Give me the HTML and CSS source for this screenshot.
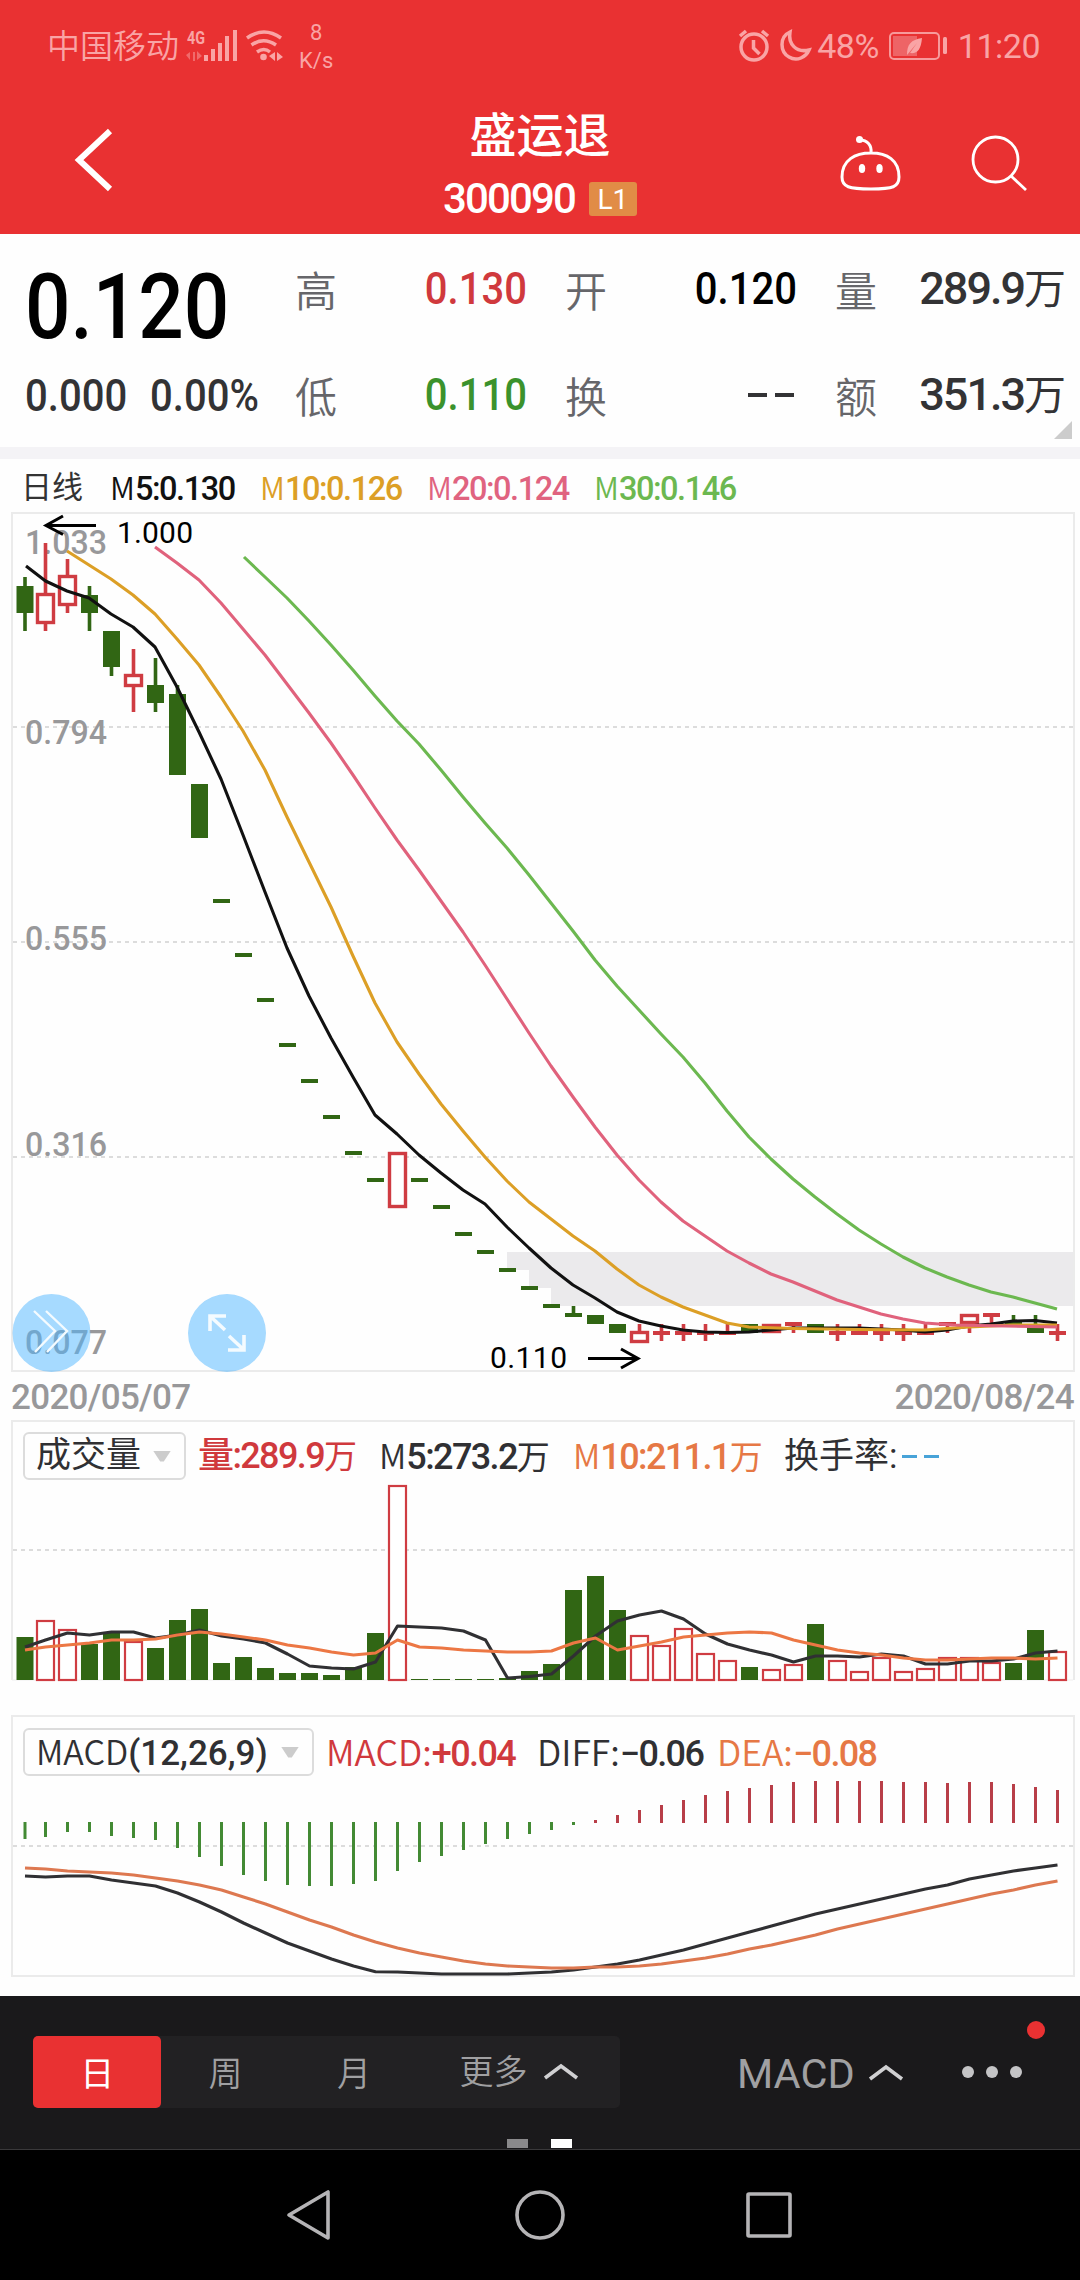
FILE: index.html
```html
<!DOCTYPE html>
<html lang="zh-CN">
<head>
<meta charset="utf-8">
<title>盛运退 300090</title>
<link rel="stylesheet" href="styles.css">
</head>
<body>
<div class="screen">
  <header class="top">
    <div class="status">
      <div class="status-left">
        <span class="carrier">中国移动</span>
        <svg class="net" width="98" height="48" viewBox="186 22 98 48">
          <text x="187" y="44" font-size="19" font-weight="700" textLength="18" lengthAdjust="spacingAndGlyphs">4G</text>
          <path class="dim" d="M190 52v8l-4-5zM193 52h2v9h-2zM197 51l5 5-5 4z"/>
          <path d="M204 55h4v6h-4zM211 49h4v12h-4zM218 43h4v18h-4zM225 36h4v25h-4zM233 30h4v31h-4z"/>
          <path class="line" d="M247 38q17-12 34 0M251.500 45q12-8.500 24.500 0M257 52q7-5 13 0"/>
          <circle cx="263.500" cy="57" r="3.300"/>
          <path d="M275 52v9l-6-5zM277 52l6 5-6 4z"/>
        </svg>
        <span class="speed"><span>8</span><span>K/s</span></span>
      </div>
      <div class="status-right">
        <svg width="74" height="36" viewBox="738 28 74 36">
          <g class="line"><circle cx="754" cy="47" r="13"/><path d="M753.500 40v8l6 6M740 36l6-5M768 36l-6-5"/><path d="M790 32c-11 5-10 20-1 25 8 5 17 0 20-7-13 3-21-6-19-18z"/></g>
        </svg>
        <span class="battery-level">48%</span>
        <svg class="battery" width="60" height="30" viewBox="888 31 60 30">
          <rect x="890" y="33" width="49" height="26" rx="4" fill="none" stroke="#f79a9b" stroke-width="2"/>
          <rect x="893" y="36" width="24" height="20" fill="#ee6466"/>
          <rect x="943" y="37" width="4" height="17" rx="1.500"/>
          <path d="M907 55c0-11 4-15 15-17-1 12-5 16-12 15l7-10z"/>
        </svg>
        <span class="clock">11:20</span>
      </div>
    </div>
    <nav class="title-bar">
      <svg class="back" width="40" height="66" viewBox="74 127 40 66"><path d="M110 131L79 160l31 29" fill="none" stroke="#fff" stroke-width="6"/></svg>
      <div class="title">
        <h1>盛运退</h1>
        <div class="code"><span class="num">300090</span><span class="badge">L1</span></div>
      </div>
      <div class="actions">
        <svg width="64" height="60" viewBox="838 134 64 60" fill="none" stroke="#fff" stroke-width="3">
          <path d="M870 153c16 0 28 7 28 24 0 10-6 12-28 12s-29-2-29-12c0-17 13-24 29-24zM870 153c1-8-4-13-11-13"/>
          <circle cx="858.500" cy="139.500" r="3.500" fill="#fff" stroke="none"/><ellipse cx="861" cy="168.500" rx="3.200" ry="4.500" fill="#fff" stroke="none"/><ellipse cx="878.500" cy="168.500" rx="3.200" ry="4.500" fill="#fff" stroke="none"/>
        </svg>
        <svg width="60" height="60" viewBox="968 132 60 60" fill="none" stroke="#fff" stroke-width="2.800"><circle cx="994.500" cy="157.500" r="22.500"/><path d="M1010 174l15 14"/></svg>
      </div>
    </nav>
  </header>

  <section class="quote">
    <div class="price num">0.120</div>
    <div class="change num"><span>0.000</span><span>0.00%</span></div>
    <dl class="stats num">
      <dt>高</dt><dd class="slim up">0.130</dd><dt>开</dt><dd class="slim flat">0.120</dd><dt>量</dt><dd>289.9<b>万</b></dd>
      <dt>低</dt><dd class="slim down">0.110</dd><dt>换</dt><dd class="dashes"><i></i><i></i></dd><dt>额</dt><dd>351.3<b>万</b></dd>
    </dl>
    <span class="corner"></span>
  </section>

  <div class="legend num">
    <span class="period">日线</span><span class="m5"><em>M</em>5:0.130</span><span class="m10"><em>M</em>10:0.126</span><span class="m20"><em>M</em>20:0.124</span><span class="m30"><em>M</em>30:0.146</span>
  </div>

  <section class="panel price-panel"><svg id="price" width="1062" height="860" viewBox="12 512 1062 860"></svg></section>
  <div class="dates num"><span>2020/05/07</span><span>2020/08/24</span></div>

  <section class="panel volume-panel">
    <svg id="volume" width="1062" height="262" viewBox="12 1420 1062 262"></svg>
    <div class="readout num">
      <button class="picker"><span>成交量</span><i class="caret"></i></button>
      <span class="vol">量:289.9<b>万</b></span><span class="v5"><em>M</em>5:273.2<b>万</b></span><span class="v10"><em>M</em>10:211.1<b>万</b></span><span class="turnover">换手率:</span><span class="blank"><i></i><i></i></span>
    </div>
  </section>

  <section class="panel macd-panel">
    <svg id="macd" width="1062" height="262" viewBox="12 1715 1062 262"></svg>
    <div class="readout num">
      <button class="picker wide"><span><em>MACD</em>(12,26,9)</span><i class="caret"></i></button>
      <span class="macd"><em>MACD:</em>+0.04</span><span class="diff"><em>DIFF:</em>−0.06</span><span class="dea"><em>DEA:</em>−0.08</span>
    </div>
  </section>

  <footer class="toolbar">
    <div class="tabs">
      <span class="tab active">日</span><span class="tab">周</span><span class="tab">月</span>
      <span class="tab more">更多<svg width="36" height="18" viewBox="0 0 36 18"><path d="M2 15L18 3l16 12"/></svg></span>
    </div>
    <span class="indicator">MACD<svg width="36" height="18" viewBox="0 0 36 18"><path d="M2 15L18 3l16 12"/></svg></span>
    <span class="dots"><i></i><i></i><i></i></span>
    <span class="alert"></span>
    <span class="pager"><i></i><i class="on"></i></span>
  </footer>
  <nav class="system">
    <svg width="1080" height="130" viewBox="0 2150 1080 130" fill="none" stroke="#b5b4b6" stroke-width="3.600" stroke-linejoin="round"><path d="M289 2215l39-23v46z"/><circle cx="540" cy="2215" r="23"/><rect x="748" y="2194" width="42" height="42" rx="1"/></svg>
  </nav>
</div>
<script src="chart.js"></script>
</body>
</html>
```
FILE: styles.css
```css
* { box-sizing: border-box; }
body { margin: 0; background: #fefefe; font-family: Roboto, "Noto Sans CJK SC", sans-serif; }
h1, dl, dt, dd { margin: 0; }
em, i { font-style: normal; }
svg { display: block; flex: none; }
.screen { width: 1080px; height: 2280px; display: flex; flex-direction: column; background: #fefefe; overflow: hidden; }
.num { font-weight: 500; letter-spacing: -0.045em; white-space: nowrap; }
.num em { font-family: "Noto Sans CJK SC", sans-serif; font-weight: 350; letter-spacing: 0; }
.num b { font-weight: 400; letter-spacing: 0; }

.top { height: 234px; background: #e93132; color: #fff; }
.status { height: 92px; display: flex; justify-content: space-between; align-items: center; padding: 0 40px 0 47px; color: #f9a4a5; font-size: 34px; line-height: 40px; }
.status svg { fill: #f9a4a5; }
.status .line { fill: none; stroke: #f9a4a5; stroke-width: 3.5; }
.status .dim { fill: #f06a6b; }
.status-left, .status-right { display: flex; align-items: center; }
.carrier { font-size: 33px; font-weight: 350; width: 139px; padding-top: 2px; }
.speed { display: flex; flex-direction: column; align-items: center; font-size: 22px; line-height: 28px; margin-left: 15px; padding-top: 1px; }
.battery-level { margin-left: 5px; letter-spacing: -0.5px; }
.battery { margin-left: 9px; }
.clock { margin-left: 10px; letter-spacing: -0.5px; }
.title-bar { height: 142px; display: grid; grid-template-columns: 1fr auto 1fr; }
.back { margin: 35px 0 0 74px; }
.title { display: flex; flex-direction: column; align-items: center; padding-top: 17px; }
.title h1 { font-size: 47px; line-height: 54px; font-weight: 500; }
.code { display: flex; align-items: center; gap: 14px; font-size: 42px; line-height: 50px; padding-top: 12px; height: 60px; }
.badge { width: 48px; height: 34px; background: #e18c46; border-radius: 3px; font-size: 28px; line-height: 35px; text-align: center; }
.actions { display: flex; justify-content: flex-end; gap: 66px; padding: 42px 51px 0 0; }

.quote { position: relative; height: 225px; display: grid; grid-template-columns: 270px 1fr; grid-template-rows: 110px 1fr; padding: 0 14px 0 25px; border-bottom: 12px solid #f4f3f6; color: #333335; }
.price, .change span, .slim { letter-spacing: 0; transform: scaleX(0.89); transform-origin: left; }
.price { font-size: 90px; line-height: 147px; color: #000; }
.change { font-size: 45px; line-height: 103px; display: flex; gap: 10px; grid-row: 2; }
.stats { grid-column: 2; grid-row: 1 / 3; display: grid; grid-template-columns: 91px 141px 129px 142px 37px 1fr; grid-template-rows: 110px 102px; align-items: center; font-size: 45px; line-height: 60px; }
.stats { grid-template-columns: 91px 142px 91px 179px 91px 1fr; grid-template-columns: 91px 141px 129px 141px 91px 1fr; }
.stats dt { font-family: "Noto Sans CJK SC", sans-serif; font-size: 42px; font-weight: 350; letter-spacing: 0; color: #66666a; }
.stats dt:nth-of-type(3n+2), .stats dt:nth-of-type(3n) { padding-left: 38px; }
.stats dd { text-align: right; margin-left: -60px; }
.stats .slim { transform-origin: right; }
.stats b { font-size: 42px; }
.up { color: #d0393d; } .down { color: #3b922c; } .flat { color: #000; }
.dashes { display: flex; justify-content: flex-end; gap: 8px; padding-right: 3px; }
.dashes i { width: 19px; height: 4px; background: #333335; }
.corner { position: absolute; right: 8px; bottom: 8px; width: 18px; height: 18px; background: #ccc; clip-path: polygon(100% 0, 100% 100%, 0 100%); }

.legend { height: 53px; display: flex; gap: 27px; padding: 5px 23px 0 21px; align-items: center; font-size: 32.5px; line-height: 40px; color: #111; }
.legend em { font-size: 31px; }
.period { font-weight: 400; letter-spacing: 0; font-size: 31px; width: 62px; color: #333; }
.m5 { width: 123px; } .m10, .m20, .m30 { width: 140px; }
.m10 { color: #dc9f26; } .m20 { color: #e06380; } .m30 { color: #6cb850; }

.panel { width: 1062px; margin-left: 12px; display: grid; flex: none; }
.panel > * { grid-area: 1 / 1; }
.panel > svg { overflow: visible; }
.price-panel { height: 860px; }
.dates { height: 48px; display: flex; justify-content: space-between; padding: 0 6px 0 11px; color: #98989a; font-size: 35px; line-height: 51px; letter-spacing: -0.7px; }
.volume-panel { height: 295px; }
.macd-panel { height: 281px; }
.readout { display: flex; align-items: center; height: 48px; margin: 12px 0 0 11px; font-size: 36px; line-height: 48px; color: #303033; }
.readout > span { padding-top: 1px; }
.macd-panel .readout { margin-top: 13px; }
.picker { width: 163px; height: 48px; padding: 0 13px 0 11px; display: flex; justify-content: space-between; align-items: center; background: #fefefe; border: 2px solid #dcdcdc; border-radius: 6px; font: 400 35px/46px Roboto, "Noto Sans CJK SC", sans-serif; color: #303033; }
.picker.wide { width: 291px; font-weight: 500; }
.caret { width: 18px; height: 11px; background: #ccc; clip-path: polygon(0 0, 100% 0, 60% 100%, 40% 100%); }
.readout b { font-size: 33px; }
.vol { width: 181px; margin-left: 12px; color: #d0393d; }
.v5 { width: 194px; } .v10 { width: 211px; color: #e67845; }
.turnover { width: 118px; font-weight: 400; letter-spacing: 0; font-size: 35px; }
.blank { display: flex; gap: 7px; } .blank i { width: 15px; height: 3px; background: #48a3d8; }
.macd { width: 211px; margin-left: 12px; color: #d0393d; } .diff { width: 180px; } .dea { color: #e67845; }
.readout em { font-size: 34px; }
.macd em, .diff em, .dea em { font-size: 35.5px; }

.toolbar { position: relative; height: 154px; flex: none; display: flex; align-items: flex-start; padding: 40px 0 0 33px; background: #1a191b; border-bottom: 1px solid #3a393b; color: #a0a0a2; font-size: 34px; }
.tabs { width: 587px; height: 72px; display: flex; background: #222123; border-radius: 5px; line-height: 76px; }
.tab { width: 128.500px; height: 72px; text-align: center; font-weight: 350; }
.tab.active { background: #e93132; color: #fff; border-radius: 5px; font-weight: 400; }
.more { width: 202px; display: flex; align-items: center; justify-content: center; gap: 15px; }
.toolbar svg path { fill: none; stroke: #d0d0d2; stroke-width: 3.6; }
.indicator { display: flex; align-items: center; gap: 13px; height: 72px; margin-left: 117px; font-size: 41.5px; padding-top: 2px; }
.dots { display: flex; gap: 12px; margin: 30px 0 0 58px; }
.dots i { width: 12px; height: 12px; border-radius: 50%; background: #c4c4c6; }
.alert { position: absolute; left: 1027px; top: 25px; width: 18px; height: 18px; border-radius: 50%; background: #e93132; }
.pager { position: absolute; left: 507px; bottom: 1px; display: flex; gap: 23px; }
.pager i { width: 21px; height: 9px; background: #8a898b; } .pager .on { background: #fff; }
.system { height: 130px; flex: none; background: #000; }

.grid { stroke: #dcdcdc; stroke-width: 2; stroke-dasharray: 4 4; }
.curve { fill: none; stroke-width: 3.1; stroke-linejoin: round; }
.axis { fill: #98989a; font: 500 34px Roboto, sans-serif; }
.extreme { fill: #000; font: 400 30px Roboto, sans-serif; }
```
FILE: chart.js
```js
const NS = 'http://www.w3.org/2000/svg';
const GREEN = '#316614', RED = '#cf3c42';
const X = i => (i ? 23.5 + 22 * i : 25);

function add(svg, tag, attrs, text) {
  const el = document.createElementNS(NS, tag);
  for (const k in attrs) el.setAttribute(k, attrs[k]);
  if (text) el.textContent = text;
  svg.appendChild(el);
  return el;
}
const rect = (s, x, y, w, h, fill) => add(s, 'rect', { x, y, width: w, height: h, fill });
const path = (s, d, stroke, width) => add(s, 'path', { d, stroke, fill: 'none', 'stroke-width': width });
const curve = (s, pts, stroke) => add(s, 'polyline', { points: pts.trim(), stroke, class: 'curve' });
const series = (s, ys, stroke) => curve(s, ys.map((y, i) => X(i) + ',' + y).join(' '), stroke);
const grid = (s, y) => add(s, 'line', { x1: 13, x2: 1073, y1: y, y2: y, class: 'grid' });

/* Price panel */
const p = document.getElementById('price');
[727, 942, 1157].forEach(y => grid(p, y));
path(p, 'M11 513H1074V1371H12V513', '#ebebeb', 2);
add(p, 'path', { d: 'M507 1252H1073V1306H551V1288H529V1270H507z', fill: '#ebeaec' });
[['1.033', 554], ['0.794', 743.5], ['0.555', 949.5], ['0.316', 1156], ['0.077', 1354]].forEach(([t, y]) =>
  add(p, 'text', { x: 25, y, class: 'axis', textLength: 82, lengthAdjust: 'spacingAndGlyphs' }, t));

/* colour, body top, body bottom, wick top, wick bottom */
const candles = [
  'g 586 613 577 631', 'r 594 623 543 631', 'r 576 605 559 613', 'g 595 613 586 631', 'g 631 667 631 676',
  'r 675 686 649 712', 'g 685 703 658 712', 'g 694 775 685 775', 'g 784 838', 'g 901', 'g 955', 'g 1000', 'g 1045',
  'g 1081', 'g 1117', 'g 1153', 'g 1180', 'r 1153 1207', 'g 1180', 'g 1207', 'g 1234', 'g 1252', 'g 1270', 'g 1288',
  'g 1306', 'g 1315 1315 1306 1315', 'g 1315 1324', 'g 1324 1333', 'r 1332 1342 1324 1332', 'r 1333 1333 1324 1341',
  'r 1333 1333 1324 1341', 'r 1333 1333 1324 1341', 'r 1333 1333 1324 1333', 'g 1324 1333', 'r 1325 1332',
  'r 1324 1324 1324 1333', 'g 1324 1333', 'r 1333 1333 1324 1341', 'r 1333 1333 1324 1333', 'r 1333 1333 1324 1341',
  'r 1333 1333 1324 1341', 'r 1333 1333 1324 1333', 'r 1324 1324 1324 1333', 'r 1315 1323 1323 1333',
  'r 1315 1315 1315 1324', 'g 1324 1324 1315 1324', 'g 1324 1333 1315 1324', 'r 1333 1333 1324 1341'
];
candles.forEach((row, i) => {
  const [c, ...n] = row.split(' ');
  const [t, b = t, wt = t, wb = b] = n.map(Number);
  const col = c === 'g' ? GREEN : RED, x = X(i);
  if (wt < t) rect(p, x - 1.8, wt, 3.6, t - wt, col);
  if (wb > b) rect(p, x - 1.8, b, 3.6, wb - b, col);
  if (b === t) rect(p, x - 8.5, t - 2, 17, 4, col);
  else if (c === 'g') rect(p, x - 8.5, t, 17, b - t, col);
  else add(p, 'rect', { x: x - 8, y: t + .5, width: 16, height: b - t - 1, fill: '#fff', stroke: RED, 'stroke-width': 3.4 });
});

curve(p, `26,566 45.5,581 67,591 89,598 111,614 133,627 155,647 177,687 199,732 221,779 243,835 265,892 287,948 309,996
 331,1038 353,1077 375,1115 397,1134 419,1155 441,1173 463,1190 485,1204 507,1227 529,1248 551,1268 573,1285 595,1298
 617,1312 639,1321 661,1326 683,1330 705,1332 727,1332.5 749,1332 771,1330 793,1328 859,1328 903,1330 925,1332
 947,1330 969,1326 991,1324 1013,1321 1035,1320.5 1057,1323`, '#111');
curve(p, `67,551 89,565 111,579 133,595 155,614 177,639 199,665 221,697 243,731 265,770 287,817 309,862 331,907 353,956
 375,1003 397,1042 419,1074 441,1104 463,1131 485,1157 507,1181 529,1202 551,1219 573,1236 595,1251 617,1269 639,1285
 661,1297 683,1307 705,1315 727,1323 749,1327 793,1328.5 859,1329.5 925,1330 969,1327 1013,1325 1057,1325`, '#dc9f26');
curve(p, `155,547 177,563 199,580 221,603 243,629 265,655 287,684 309,713 331,743 353,775 375,808 397,840 419,870 441,901
 463,932 485,965 507,999 529,1033 551,1066 573,1097 595,1127 617,1155 639,1180 661,1202 683,1221 705,1236 727,1251
 749,1263 771,1274 793,1282 815,1291 837,1300 859,1307 881,1314 903,1319 925,1323 953,1325 1057,1327`, '#e0627c');
curve(p, `244,557 265,577 287,598 309,621 331,645 353,670 375,696 397,721 419,744 441,770 463,797 485,823 507,848 529,875
 551,903 573,931 595,960 617,986 639,1010 661,1034 683,1057 705,1083 727,1111 749,1137 771,1159 793,1179 815,1197
 837,1214 859,1230 881,1244 903,1257 925,1268 947,1277 969,1285 991,1292 1013,1297 1057,1309`, '#6cb850');

path(p, 'M96 525.5H46M63 516L46 525.5l17 9', '#000', 3);
add(p, 'text', { x: 117, y: 543, class: 'extreme', textLength: 76 }, '1.000');
path(p, 'M588 1358.5H638M621 1349l17 9.5-17 9.5', '#000', 3);
add(p, 'text', { x: 490, y: 1368, class: 'extreme', textLength: 77 }, '0.110');

[51.5, 227].forEach(cx => add(p, 'circle', { cx, cy: 1333, r: 39, fill: 'rgba(77,181,255,.5)' }));
path(p, 'M34 1311l21 20-20 21M46 1311l21 20-20 21', '#f4fbff', 2.4);
path(p, 'M225 1330l-15-14M210 1331v-15h16M229 1336l15 14M244 1335v15h-16', '#f4fbff', 3.6);

/* Volume panel */
const v = document.getElementById('volume');
grid(v, 1550);
path(v, 'M12 1680V1421H1074V1680', '#ebebeb', 2);
path(v, 'M12 1680H1073', '#eee', 1);
const tops = [1637,1620,1629,1644,1633,1641,1648,1620,1609,1663,1657,1668,1673,1673,1675,1667,1633,1485,1679,1679,1679,
  1679,1678,1671,1664,1590,1576,1610,1635,1645,1628,1653,1660,1667,1669,1664,1624,1660,1671,1657,1671,1668,1657,1657,
  1662,1663,1630,1651];
tops.forEach((t, i) => {
  if (candles[i][0] === 'g') rect(v, X(i) - 8.5, t, 17, 1680 - t, GREEN);
  else add(v, 'rect', { x: X(i) - 8.5, y: t + 1, width: 17, height: 1679 - t, fill: '#fff', stroke: RED, 'stroke-width': 2.2 });
});
series(v, [1647,1640,1633,1635,1632,1632,1638,1635,1630,1636,1639,1643,1654,1666,1668,1669,1662,1626,1627,1628,1631,1640,
  1678,1676.5,1674,1656,1636,1621,1615,1611,1619,1634,1644,1650,1655,1662,1656,1656,1657,1654,1656,1664,1664,1661,1661,
  1659,1653,1651], '#303033');
series(v, [1650,1647,1645,1643,1640,1640,1639,1635,1632,1634,1637,1640,1645,1648,1652,1655,1653,1640,1647,1648,1650,1651,
  1652,1652,1651,1643,1638,1650,1646,1642,1637,1635,1633,1632,1633,1640,1645,1650,1653,1655,1658,1660,1660,1659,1658,
  1658,1659,1658], '#ec7744');

/* MACD panel */
const m = document.getElementById('macd');
grid(m, 1846);
path(m, 'M11 1716H1074V1976H12V1716', '#ebebeb', 2);
[1839,1837,1832,1832,1836,1838,1840,1848,1857,1866,1875,1881,1885,1886,1886,1884,1881,1871,1862,1856,1850,1844,1839,1834,
  1830,1825,1820,1815,1810,1805,1800,1795,1791,1788,1785,1782,1781,1781,1781,1781,1782,1782,1783,1782,1782,1784,1787,
  1790].forEach((y, i) => {
  if (y > 1822) rect(m, X(i) - 1.5, 1822, 3, y - 1822, '#438a34');
  else rect(m, X(i) - 1.5, y, 3, 1823 - y, '#b83e48');
});
series(m, [1876,1877,1876,1876,1880,1883,1886,1893,1902,1912,1923,1933,1943,1951,1959,1966,1971.7,1972,1973,1974,1974,1974,
  1974,1973,1972,1970,1967,1964,1960,1955,1950,1944,1938,1932,1926,1920,1914,1909,1904,1899,1894,1889,1885,1879,1875,
  1871,1868,1865], '#303033');
series(m, [1868,1869,1871,1872,1873,1875,1878,1881,1885,1890,1897,1904,1912,1920,1927,1935,1942,1948,1953,1957,1961,1964,
  1966,1967,1968,1968,1967,1967,1966,1964,1961,1958,1954,1949,1945,1940,1935,1929,1924,1919,1914,1909,1904,1899,1894,
  1890,1885,1881], '#dd7850');
```
